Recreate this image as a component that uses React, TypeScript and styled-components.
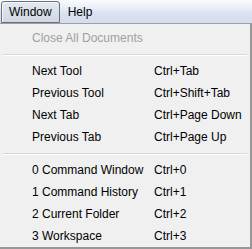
import React from 'react';
import styled, { createGlobalStyle } from 'styled-components';

const GlobalStyle = createGlobalStyle`
  body {
    margin: 0;
    background: #f0f0f0;
    font-family: 'Liberation Sans', Arial, sans-serif;
  }
`;

interface Item {
  label?: string;
  shortcut?: string;
  disabled?: boolean;
  separator?: boolean;
}

const items: Item[] = [
  { label: 'Close All Documents', disabled: true },
  { separator: true },
  { label: 'Next Tool', shortcut: 'Ctrl+Tab' },
  { label: 'Previous Tool', shortcut: 'Ctrl+Shift+Tab' },
  { label: 'Next Tab', shortcut: 'Ctrl+Page Down' },
  { label: 'Previous Tab', shortcut: 'Ctrl+Page Up' },
  { separator: true },
  { label: '0 Command Window', shortcut: 'Ctrl+0' },
  { label: '1 Command History', shortcut: 'Ctrl+1' },
  { label: '2 Current Folder', shortcut: 'Ctrl+2' },
  { label: '3 Workspace', shortcut: 'Ctrl+3' },
];

export default function App() {
  return (
    <>
      <GlobalStyle />
      <Frame>
        <MenuBar>
          <MenuTitle $open>Window</MenuTitle>
          <MenuTitle>Help</MenuTitle>
        </MenuBar>
        <Menu>
          {items.map((item, i) =>
            item.separator ? (
              <Separator key={i} />
            ) : (
              <Row key={i} $disabled={item.disabled}>
                <Label>{item.label}</Label>
                <Shortcut>{item.shortcut}</Shortcut>
              </Row>
            )
          )}
        </Menu>
      </Frame>
    </>
  );
}

const Frame = styled.div`
  width: 252px;
  height: 249px;
  display: flex;
  flex-direction: column;
`;

const MenuBar = styled.div`
  height: 24px;
  display: flex;
  align-items: stretch;
  padding: 1px 0 0 1px;
  box-sizing: border-box;
  background: linear-gradient(#fbfcfe 0%, #e9edf7 35%, #d9e0f1 60%, #d6ddf0 100%);
`;

const MenuTitle = styled.div<{ $open?: boolean }>`
  display: flex;
  align-items: center;
  padding: 0 7px;
  font-size: 12px;
  color: #000;
  border: 1px solid ${(p) => (p.$open ? '#6b6f78' : 'transparent')};
  border-radius: 3px 3px 0 0;
  background: ${(p) =>
    p.$open ? 'linear-gradient(#e3e8f1, #d0d7e4)' : 'transparent'};
  box-shadow: ${(p) => (p.$open ? 'inset 1px 1px 0 #f4f6fa' : 'none')};
`;

const Menu = styled.div`
  flex: 1;
  background: #f0f0f0;
  border-top: 1px solid #a0a0a0;
  border-right: 2px solid #979797;
  border-bottom: 2px solid #979797;
  padding: 3px 0 0;
  box-sizing: border-box;
`;

const Row = styled.div<{ $disabled?: boolean }>`
  height: 22px;
  display: flex;
  align-items: center;
  padding-left: 32px;
  font-size: 12px;
  color: ${(p) => (p.$disabled ? '#a0a0a0' : '#000')};
`;

const Label = styled.span`
  width: 122px;
  white-space: nowrap;
`;

const Shortcut = styled.span`
  white-space: nowrap;
`;

const Separator = styled.div`
  height: 11px;
  display: flex;
  align-items: center;
  padding: 0 3px;

  &::before {
    content: '';
    flex: 1;
    height: 1px;
    background: #d7d7d7;
    box-shadow: 0 1px 0 #fff;
  }
`;
